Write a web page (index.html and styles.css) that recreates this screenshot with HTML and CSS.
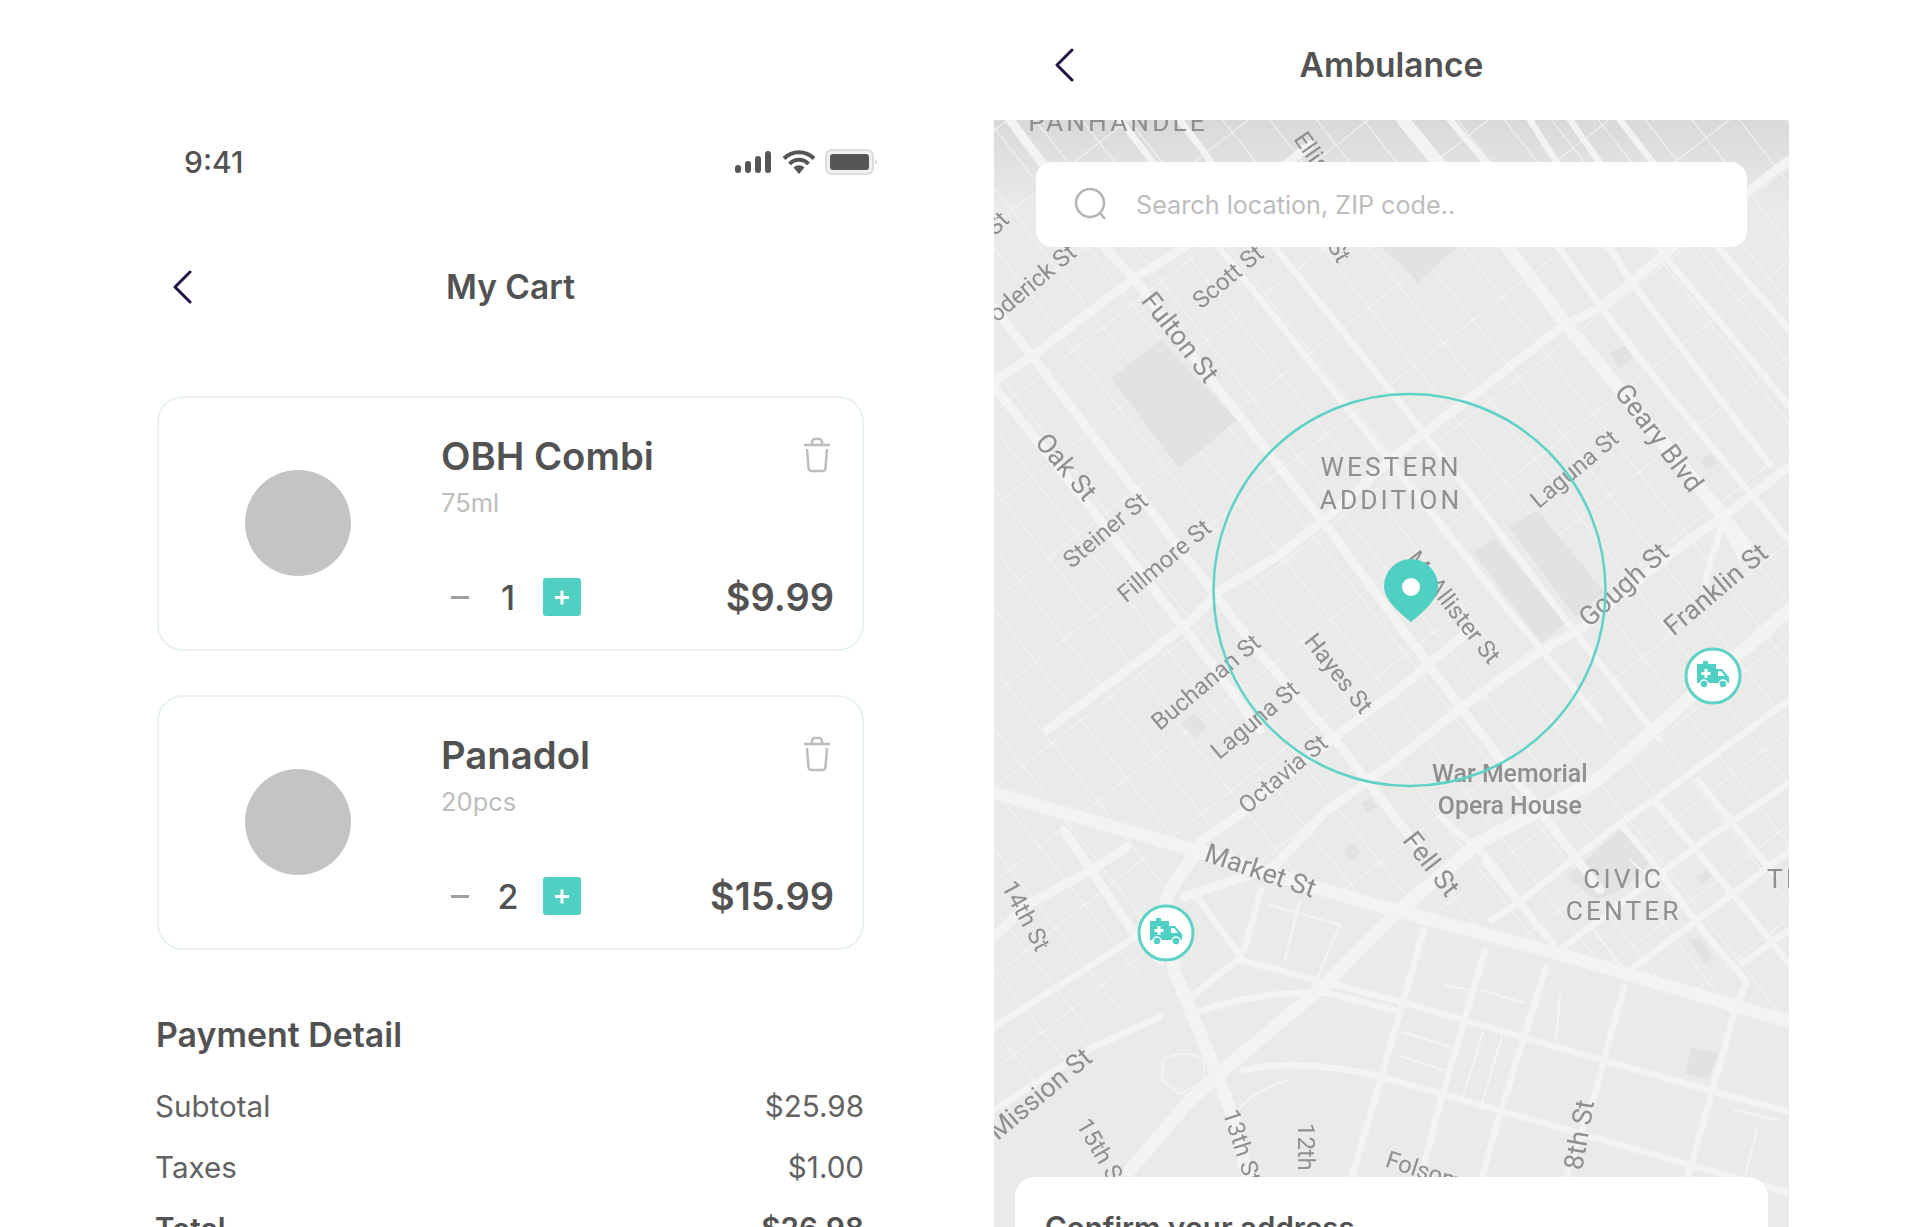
FILE: index.html
```html
<!DOCTYPE html>
<html lang="en">
<head>
  <meta charset="UTF-8" />
  <meta name="viewport" content="width=device-width, initial-scale=1.0"/>
  <title>My Cart / Ambulance</title>
  <link rel="stylesheet" href="styles.css">
</head>
<body>
  <div class="page">

    <!-- cart screen -->
    <section class="cart">
      <div class="status">
        <span class="time">9:41</span>
        <div class="status-icons">
          <svg width="38" height="24" viewBox="0 0 38 24">
            <rect x="1" y="15" width="6" height="8" rx="3" fill="#555"/>
            <rect x="11" y="11" width="6" height="12" rx="3" fill="#555"/>
            <rect x="21" y="6" width="6" height="17" rx="3" fill="#555"/>
            <rect x="31" y="1" width="6" height="22" rx="3" fill="#555"/>
          </svg>
          <svg width="34" height="26" viewBox="0 0 34 26">
            <path d="M2 9.500a21 21 0 0 1 30 0M7.500 15a13 13 0 0 1 19 0" fill="none" stroke="#555" stroke-width="4"/>
            <path d="M11.500 18.500a8 8 0 0 1 11 0L17 25z" fill="#555"/>
          </svg>
          <svg width="53" height="26" viewBox="0 0 53 26">
            <rect x="1" y="1" width="47" height="24" rx="6" fill="#f1f1f1" stroke="#ddd" stroke-width="2"/>
            <rect x="5" y="5" width="39" height="16" rx="3" fill="#555"/>
            <path d="M50 10l3 3-3 3z" fill="#ddd"/>
          </svg>
        </div>
      </div>

      <header class="title-bar">
        <svg class="chevron" width="20" height="34" viewBox="0 0 20 34"><path d="M18 2L3 17l15 15"/></svg>
        <h1>My Cart</h1>
      </header>

      <div class="items">
        <article class="item">
          <div class="item-img"></div>
          <div class="item-body">
            <div class="item-top">
              <h2>OBH Combi</h2>
              <svg class="trash" width="30" height="36" viewBox="0 0 30 36"><path d="M10 8V5a3 3 0 0 1 3-3h4a3 3 0 0 1 3 3v3M2 8h26M5 12l1.500 19a3 3 0 0 0 3 3h11a3 3 0 0 0 3-3L25 12"/></svg>
            </div>
            <div class="item-size">75ml</div>
            <div class="item-bottom">
              <span class="minus"></span>
              <span class="qty">1</span>
              <span class="plus"></span>
              <span class="price">$9.99</span>
            </div>
          </div>
        </article>

        <article class="item">
          <div class="item-img"></div>
          <div class="item-body">
            <div class="item-top">
              <h2>Panadol</h2>
              <svg class="trash" width="30" height="36" viewBox="0 0 30 36"><path d="M10 8V5a3 3 0 0 1 3-3h4a3 3 0 0 1 3 3v3M2 8h26M5 12l1.500 19a3 3 0 0 0 3 3h11a3 3 0 0 0 3-3L25 12"/></svg>
            </div>
            <div class="item-size">20pcs</div>
            <div class="item-bottom">
              <span class="minus"></span>
              <span class="qty">2</span>
              <span class="plus"></span>
              <span class="price">$15.99</span>
            </div>
          </div>
        </article>
      </div>

      <h3 class="pay-title">Payment Detail</h3>
      <div class="pay-rows">
        <div class="pay-row"><span>Subtotal</span><span>$25.98</span></div>
        <div class="pay-row"><span>Taxes</span><span>$1.00</span></div>
        <div class="pay-row total"><span>Total</span><span>$26.98</span></div>
      </div>
    </section>

    <!-- ambulance screen -->
    <section class="ambulance">
      <header class="title-bar amb-bar">
        <svg class="chevron" width="20" height="34" viewBox="0 0 20 34"><path d="M18 2L3 17l15 15"/></svg>
        <h1>Ambulance</h1>
      </header>

      <div class="map">
        <svg class="map-svg" width="795" height="1107" viewBox="994 120 795 1107">
          <defs>
            <pattern id="gridA" width="74" height="37" patternUnits="userSpaceOnUse" patternTransform="translate(1012 210) rotate(52)">
              <path d="M0 0H74M0 0V37" fill="none" stroke="#f4f4f3" stroke-width="2"/>
            </pattern>
            <clipPath id="north"><path d="M994 120H1789V1023L1556 953 1394 907 1194 850 994 793Z"/></clipPath>
            <clipPath id="southwest"><path d="M994 793L1194 850 1130 1000 994 1120Z"/></clipPath>
            <linearGradient id="topShade" x1="0" y1="0" x2="0" y2="1">
              <stop offset="0" stop-color="#d9d9d8"/>
              <stop offset="1" stop-color="#d9d9d8" stop-opacity="0"/>
            </linearGradient>
            <symbol id="amb-marker" viewBox="-29 -29 58 58">
              <circle r="27" fill="#fff" stroke="#5fd2c7" stroke-width="3"/>
              <rect x="-10" y="-15" width="5" height="4" fill="#4fd0c3"/>
              <path d="M-16-12H3V-7H9L16 1V7H-16Z" fill="#4fd0c3"/>
              <path d="M5-5H8L12 0H5Z" fill="#fff"/>
              <path d="M-8.500-7h3v3h3v3h-3v3h-3v-3h-3v-3h3z" fill="#fff"/>
              <circle cx="-9" cy="8" r="4" fill="#4fd0c3" stroke="#fff" stroke-width="1.400"/>
              <circle cx="10" cy="8" r="4" fill="#4fd0c3" stroke="#fff" stroke-width="1.400"/>
            </symbol>
          </defs>

          <rect x="994" y="120" width="795" height="1107" fill="#eaeae9"/>
          <rect x="994" y="120" width="795" height="90" fill="url(#topShade)"/>

          <rect clip-path="url(#north)" x="994" y="120" width="795" height="910" fill="url(#gridA)"/>
          <rect clip-path="url(#southwest)" x="994" y="790" width="210" height="340" fill="url(#gridA)"/>

          <!-- blocks -->
          <g fill="#e1e2e1">
            <path d="M1111 378L1161 340 1237 420 1179 468Z"/>
            <path d="M1509 527L1537 510 1605 593 1575 617Z"/>
            <path d="M1474 553L1494 537 1566 623 1541 643Z"/>
            <path d="M1380 247H1457L1417 283 1401 263Z"/>
            <path d="M1566 877L1620 830 1651 860 1627 887 1597 900Z"/>
            <path d="M1610 353L1624 345 1634 357 1620 370Z"/>
            <path d="M1700 460L1711 453 1718 463 1706 470Z"/>
            <path d="M1182 723L1194 713 1207 727 1196 738Z"/>
            <path d="M1361 803L1371 797 1377 807 1367 813Z"/>
            <path d="M1344 850L1354 843 1361 853 1351 860Z"/>
            <path d="M1691 1047L1718 1053 1708 1080 1686 1073Z"/>
            <path d="M1690 940L1700 937 1713 958 1703 963Z"/>
            <path d="M1696 877L1707 870 1712 877 1701 883Z"/>
          </g>

          <!-- roads -->
          <g fill="none" stroke="#f3f3f2" stroke-linejoin="round" stroke-linecap="round">
            <g stroke-width="13">
              <path d="M994 793L1194 850 1314 887 1394 910 1556 953 1794 1023"/>
              <path d="M1789 610L1597 780 1478 843 1394 915 1327 983 1247 1050 1190 1100 1130 1170"/>
              <path d="M1403 120L1507 247 1563 320 1718 510 1745 545"/>
              <path d="M1200 850Q1172 880 1166 903L1174 970 1207 1050 1233 1117 1248 1177"/>
            </g>
            <g stroke-width="9">
              <path d="M994 382L1027 360 1134 278 1181 250 1310 145"/>
              <path d="M1789 160L1670 250 1601 307 1561 327 1471 397 1424 433 1394 457 1327 517 1277 557 1221 590 1194 617 1154 650 1047 730"/>
              <path d="M1200 842L1241 813 1327 743 1361 717 1394 693 1470 630"/>
              <path d="M1794 463L1728 513 1671 553 1583 627 1538 653 1467 703 1400 757 1324 813 1274 867 1184 897"/>
              <path d="M994 307L1037 363 1191 563 1257 650 1341 747 1420 850"/>
              <path d="M994 387L1087 503 1201 650 1260 730"/>
              <path d="M1010 120L1107 250 1134 278 1211 380 1327 527 1440 680 1520 785 1600 890"/>
              <path d="M994 937L1024 907 1091 870 1127 847"/>
              <path d="M1064 830L1134 933 1160 960"/>
            </g>
            <g stroke-width="6.500">
              <path d="M1180 120L1277 250 1394 395 1424 433 1571 627 1660 740"/>
              <path d="M1120 120L1221 250 1391 463 1500 600 1600 720"/>
              <path d="M1450 120L1560 250 1640 360 1748 490 1794 547"/>
              <path d="M1530 120L1630 280 1770 465"/>
              <path d="M1570 120L1664 255 1794 412"/>
              <path d="M1620 120L1720 250 1794 335"/>
              <path d="M1441 817L1489 860 1543 933"/>
              <path d="M1485 863L1553 943"/>
              <path d="M1620 823L1657 867 1694 920 1745 980"/>
              <path d="M1654 800L1732 893 1792 967"/>
              <path d="M1698 780L1776 877"/>
              <path d="M1492 920L1522 900 1620 823 1664 793 1681 780 1789 700"/>
              <path d="M1560 950L1701 843 1794 780"/>
              <path d="M1630 970L1738 890 1794 847"/>
              <path d="M1742 963L1794 927"/>
              <path d="M1424 930L1352 1177"/>
              <path d="M1485 950L1441 1100 1421 1177"/>
              <path d="M1546 967L1499 1117 1482 1177"/>
              <path d="M1624 987L1593 1100 1566 1177"/>
              <path d="M1746 983L1732 1020 1688 1177"/>
              <path d="M1241 960L1327 983 1394 1000 1522 1037 1708 1090 1794 1113"/>
              <path d="M1198 1012Q1260 990 1327 993L1394 1010"/>
              <path d="M1243 1070Q1300 1058 1382 1077L1789 1193"/>
              <path d="M1197 897L1241 957"/>
              <path d="M1261 890L1244 950"/>
              <path d="M1191 997L1241 957"/>
              <path d="M994 1027L1131 940 1140 933"/>
              <path d="M994 1110L1087 1050 1160 1017"/>
              <path d="M1722 525L1708 570 1705 585"/>
              <path d="M1724 525L1741 557"/>
            </g>
            <g stroke-width="2" stroke="#f4f4f3">
              <path d="M1443 985L1470 990"/>
              <path d="M1482 990L1524 1003"/>
              <path d="M1402 1032L1448 1046"/>
              <path d="M1400 1056L1444 1070"/>
              <path d="M1483 1032L1462 1100"/>
              <path d="M1502 1036L1480 1110"/>
              <path d="M1560 995L1556 1040"/>
              <path d="M1734 1110L1778 1120"/>
              <path d="M1757 1130L1745 1176"/>
              <path d="M1270 905L1340 925 1312 990"/>
              <path d="M1300 900L1285 960"/>
              <path d="M1700 920L1630 860"/>
              <path d="M1590 925L1620 965"/>
              <path d="M1235 1115Q1250 1090 1290 1080"/>
            </g>
            <path d="M1163 1060Q1185 1048 1203 1060L1205 1080 1180 1094 1162 1080Z" stroke-width="2"/>
          </g>

          <g class="labels" transform="scale(1.22449)">
            <text x="913" y="107" class="area">PANHANDLE</text>
            <text transform="translate(1066 128) rotate(55)" class="street">Ellis</text>
            <text transform="translate(819 187) rotate(-45)" class="street">St</text>
            <text transform="translate(840 242) rotate(-40)" class="street">Broderick St</text>
            <text transform="translate(1088 208) rotate(60)" class="street">St</text>
            <text transform="translate(1007 231) rotate(-40)" class="street">Scott St</text>
            <text transform="translate(958 280) rotate(52)" class="street big">Fulton St</text>
            <text transform="translate(865 386) rotate(50)" class="street big">Oak St</text>
            <text transform="translate(907 438) rotate(-40)" class="street">Steiner St</text>
            <text transform="translate(955 463) rotate(-40)" class="street">Fillmore St</text>
            <text transform="translate(1290 388) rotate(-40)" class="street">Laguna St</text>
            <text transform="translate(1349 362) rotate(53)" class="street big">Geary Blvd</text>
            <text transform="translate(1331 483) rotate(-42)" class="street big">Gough St</text>
            <text transform="translate(1406 487) rotate(-40)" class="street big">Franklin St</text>
            <text transform="translate(1182 500) rotate(52)" class="street">McAllister St</text>
            <text transform="translate(989 562) rotate(-40)" class="street">Buchanan St</text>
            <text transform="translate(1088 554) rotate(52)" class="street">Hayes St</text>
            <text transform="translate(1029 593) rotate(-40)" class="street">Laguna St</text>
            <text transform="translate(1052 637) rotate(-40)" class="street">Octavia St</text>
            <text x="1233" y="639" class="place">War Memorial</text>
            <text x="1233" y="665" class="place">Opera House</text>
            <text transform="translate(1027 718) rotate(19)" class="street big">Market St</text>
            <text transform="translate(1163 710) rotate(52)" class="street big">Fell St</text>
            <text x="1326" y="725" class="area">CIVIC</text>
            <text x="1326" y="751" class="area">CENTER</text>
            <text x="1443" y="725" class="area start">TI</text>
            <text transform="translate(832 751) rotate(62)" class="street">14th St</text>
            <text transform="translate(854 899) rotate(-40)" class="street big">Mission St</text>
            <text transform="translate(894 945) rotate(60)" class="street">15th St</text>
            <text transform="translate(1008 938) rotate(72)" class="street">13th St</text>
            <text transform="translate(1060 948) rotate(90)" class="street">12th St</text>
            <text transform="translate(1172 966) rotate(18)" class="street">Folsom St</text>
            <text transform="translate(1297 928) rotate(-80)" class="street big">8th St</text>
            <text x="1136" y="389" class="area">WESTERN</text>
            <text x="1136" y="416" class="area">ADDITION</text>
          </g>

          <circle cx="1409.500" cy="590" r="196" fill="none" stroke="#5fd2c7" stroke-width="2.500"/>

          <path d="M1411 622C1399 612 1384 600 1384 586a27 27 0 0 1 54 0C1438 600 1423 612 1411 622Z" fill="#4fd0c3"/>
          <circle cx="1411" cy="587" r="9" fill="#fff"/>

          <use href="#amb-marker" x="1684" y="647" width="58" height="58"/>
          <use href="#amb-marker" x="1137" y="904" width="58" height="58"/>
        </svg>

        <div class="search">
          <svg width="34" height="34" viewBox="0 0 34 34"><circle cx="16" cy="15" r="14"/><path d="M26 25l5 6"/></svg>
          <span>Search location, ZIP code..</span>
        </div>

        <div class="confirm">
          <h3>Confirm your address</h3>
        </div>
      </div>
    </section>
  </div>
</body>
</html>
```

FILE: styles.css
```css
* {
  box-sizing: border-box;
}

body {
  margin: 0;
  background: #fff;
  color: #525252;
  font-family: 'Inter', 'Liberation Sans', sans-serif;
}

h1, h2, h3 {
  margin: 0;
}

.page {
  display: flex;
  height: 1227px;
  overflow: hidden;
}

/* cart */

.cart {
  width: 707px;
  margin-left: 157px;
  flex-shrink: 0;
}

.status {
  display: flex;
  justify-content: space-between;
  align-items: center;
  height: 32px;
  margin: 146px -15px 0 27px;
}

.time {
  font-size: 30px;
  font-weight: 500;
}

.status-icons {
  display: flex;
  align-items: center;
  gap: 9.500px;
  margin-right: 1px;
}

.title-bar {
  display: grid;
  grid-template-columns: 1fr auto 1fr;
  align-items: center;
  height: 46px;
  margin-top: 86px;
}

.title-bar h1 {
  font-size: 33.500px;
  line-height: 46px;
  font-weight: 600;
}

.chevron {
  margin-left: 15px;
  fill: none;
  stroke: #231346;
  stroke-width: 3;
  stroke-linecap: round;
  stroke-linejoin: round;
}

.items {
  display: flex;
  flex-direction: column;
  gap: 44px;
  margin-top: 86px;
}

.item {
  display: flex;
  height: 255px;
  padding: 36px 28px 0 86px;
  border: 2px solid #e8f3f1;
  border-radius: 26px;
}

.item-img {
  width: 106px;
  height: 106px;
  margin: 36px 90px 0 0;
  border-radius: 50%;
  background: #c4c4c4;
  flex-shrink: 0;
}

.item-body {
  flex: 1;
}

.item-top {
  display: flex;
  justify-content: space-between;
  align-items: center;
  height: 44px;
}

.item-top h2 {
  font-size: 38.300px;
  font-weight: 600;
}

.trash {
  margin: -2px 2px 0 0;
  fill: none;
  stroke: #bdbdbd;
  stroke-width: 2.500;
}

.item-size {
  margin-top: 10px;
  font-size: 25.500px;
  line-height: 30px;
  color: #bdbdbd;
}

.item-bottom {
  display: flex;
  align-items: center;
  height: 38px;
  margin-top: 60px;
}

.minus {
  width: 18px;
  height: 3px;
  margin-left: 10px;
  background: #a0a0a0;
}

.qty {
  width: 38px;
  margin-left: 20px;
  font-size: 34px;
  font-weight: 500;
  text-align: center;
}

.plus {
  position: relative;
  width: 38px;
  height: 38px;
  margin-left: 16px;
  border-radius: 3px;
  background: #4fd0c3;
}

.plus::before,
.plus::after {
  content: '';
  position: absolute;
  left: 12px;
  top: 17.500px;
  width: 14px;
  height: 3px;
  background: #fff;
}

.plus::after {
  transform: rotate(90deg);
}

.price {
  margin-left: auto;
  font-size: 38px;
  font-weight: 600;
}

.pay-title {
  margin: 65px 0 0 -1px;
  font-size: 33.900px;
  line-height: 40px;
  font-weight: 600;
}

.pay-rows {
  display: flex;
  flex-direction: column;
  gap: 21px;
  margin: 31px 0 0 -2px;
}

.pay-row {
  display: flex;
  justify-content: space-between;
  font-size: 29.600px;
  line-height: 40px;
  color: #626262;
}

.pay-row.total {
  font-weight: 600;
  color: #525252;
}

/* ambulance */

.ambulance {
  width: 795px;
  margin-left: 130px;
  flex-shrink: 0;
}

.amb-bar {
  height: 120px;
  margin-top: 0;
  padding-top: 10px;
}

.amb-bar .chevron {
  margin-left: 60px;
}

.map {
  position: relative;
  height: 1107px;
  overflow: hidden;
}

.map-svg {
  display: block;
  filter: blur(0.6px);
}

.labels text {
  font-family: 'Roboto', 'Liberation Sans', sans-serif;
  text-anchor: middle;
  fill: #8f8f8f;
}

.labels .street {
  font-size: 19.500px;
}

.labels .big {
  font-size: 22px;
}

.labels .place {
  font-size: 20.300px;
  font-weight: 500;
}

.labels .area {
  font-size: 21.500px;
  letter-spacing: 2.500px;
}

.labels .start {
  text-anchor: start;
}

.search {
  position: absolute;
  top: 42px;
  left: 42px;
  right: 42px;
  height: 85px;
  display: flex;
  align-items: center;
  gap: 28px;
  padding-left: 38px;
  border-radius: 16px;
  background: #fff;
  font-size: 25.200px;
  color: #bdbdbd;
}

.search svg {
  fill: none;
  stroke: #b4b4b4;
  stroke-width: 2.500;
}

.confirm {
  position: absolute;
  top: 1057px;
  left: 21px;
  right: 21px;
  height: 80px;
  padding: 32px 30px 0;
  border-radius: 20px;
  background: #fff;
}

.confirm h3 {
  font-size: 29.500px;
  font-weight: 600;
  line-height: 36px;
}
```
